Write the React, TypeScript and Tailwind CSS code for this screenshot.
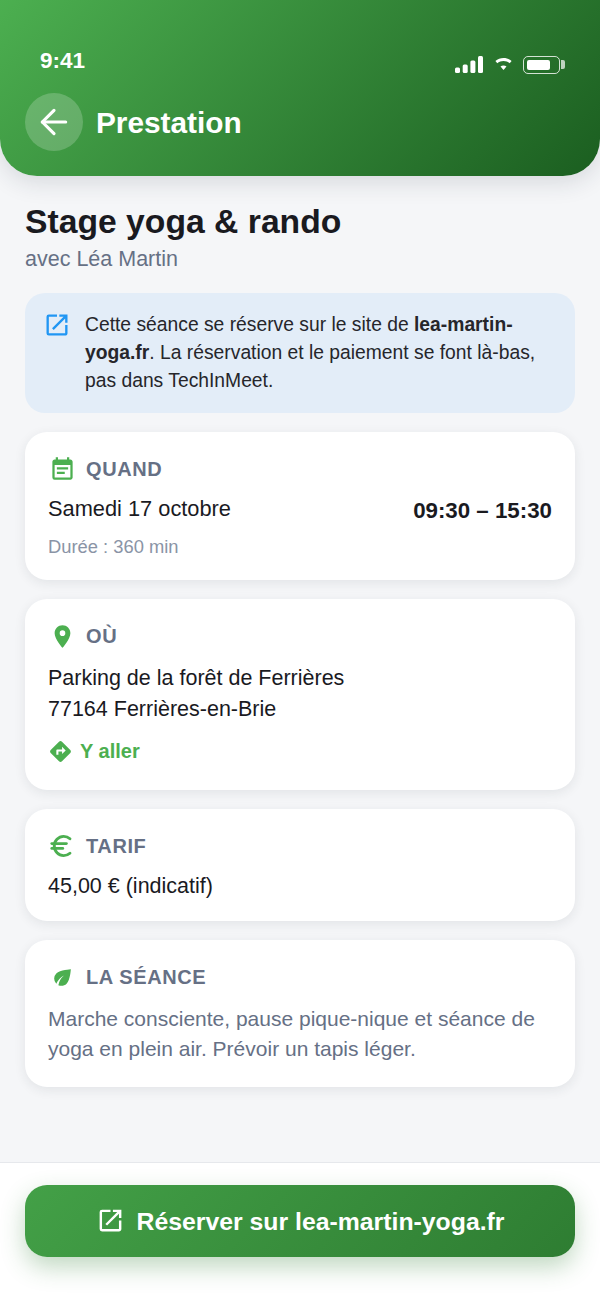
import React from 'react';
import { ArrowLeft, Euro } from 'lucide-react';
import { MdOpenInNew, MdEventNote, MdPlace, MdDirections, MdEco } from 'react-icons/md';

function StatusIcons() {
    return (
        <div className="flex items-center gap-[11px]">
            {/* signal */}
            <svg width="28" height="17" viewBox="0 0 28 17" fill="white">
                <rect x="0" y="11.5" width="5" height="5.5" rx="1.5" />
                <rect x="7.7" y="8.5" width="5" height="8.5" rx="1.5" />
                <rect x="15.4" y="4.5" width="5" height="12.5" rx="1.5" />
                <rect x="23" y="0" width="5" height="17" rx="1.5" />
            </svg>
            {/* wifi */}
            <svg width="17" height="13" viewBox="0 0 17 13" fill="white" className="ml-[1px]">
                <path d="M8.5 0c3 0 5.9 1.1 8.1 3.1l-1.9 2.1c-1.7-1.5-3.9-2.3-6.2-2.3s-4.5.8-6.2 2.3L.4 3.1C2.6 1.1 5.5 0 8.5 0z" />
                <path d="M5.5 8.5l3 3.5 3-3.5c-1.7-1.3-4.3-1.3-6 0z" />
            </svg>
            {/* battery */}
            <div className="flex items-center gap-[1px]">
                <div className="w-[37px] h-[18px] rounded-[5px] border-[1.5px] border-white/80 p-[3px]">
                    <div className="w-[23px] h-full rounded-[2px] bg-white" />
                </div>
                <div className="w-[4px] h-[9px] rounded-r-[2px] bg-white/70" />
            </div>
        </div>
    );
}

function Card({ icon, label, children }: { icon: React.ReactNode; label: string; children: React.ReactNode }) {
    return (
        <div className="bg-white rounded-[22px] shadow-[0_3px_12px_rgba(30,41,59,0.09)] px-[23px] pt-[23px] pb-[18px]">
            <div className="flex items-center h-[28px] mb-[10px]">
                <div className="w-[28px] flex justify-center text-[#4caf50] mr-[10px]">{icon}</div>
                <span className="text-[20px] leading-[28px] font-bold tracking-[0.6px] text-[#667085]">{label}</span>
            </div>
            {children}
        </div>
    );
}

export default function App() {
    return (
        <div className="w-[600px] h-[1300px] bg-[#f5f6f8] flex flex-col overflow-hidden font-['Liberation_Sans',sans-serif]">
            {/* Header */}
            <header className="h-[176px] shrink-0 rounded-b-[37px] bg-[linear-gradient(135deg,#4caf50,#1b5e20)] shadow-[0_6px_24px_rgba(30,41,59,0.14)] px-[25px] relative z-10">
                <div className="flex items-center justify-between pt-[47px] pl-[15px] pr-[10px] h-[74px]">
                    <span className="text-[22.5px] leading-[28px] font-bold text-white">9:41</span>
                    <div className="mt-[8px]">
                        <StatusIcons />
                    </div>
                </div>
                <div className="flex items-center gap-[13px] mt-[19px]">
                    <div className="w-[58px] h-[58px] rounded-full bg-white/20 flex items-center justify-center">
                        <ArrowLeft size={40} color="white" strokeWidth={1.9} />
                    </div>
                    <h1 className="mt-[2px] text-[29.8px] leading-[40px] font-bold text-white">Prestation</h1>
                </div>
            </header>

            {/* Content */}
            <main className="flex-1 px-[25px]">
                <h2 className="mt-[25px] text-[33.7px] leading-[40px] font-bold text-[#1a1a1f]">Stage yoga &amp; rando</h2>
                <p className="mt-[4px] text-[21.5px] leading-[28px] text-[#667085]">avec Léa Martin</p>

                <div className="mt-[20px] flex gap-[14px] rounded-[20px] bg-[#e3edf8] pl-[18px] pr-[30px] pt-[18px] pb-[10px] h-[120px]">
                    <MdOpenInNew size={28} color="#2196f3" className="shrink-0" />
                    <p className="text-[19.3px] leading-[28px] text-[#26262b]">
                        Cette séance se réserve sur le site de <strong className="font-bold">lea-martin-yoga.fr</strong>. La réservation et le paiement se font là-bas, pas dans TechInMeet.
                    </p>
                </div>

                <div className="mt-[19px] flex flex-col gap-[19px]">
                    <Card icon={<MdEventNote size={27} />} label="QUAND">
                        <div className="flex justify-between items-start">
                            <span className="text-[21.8px] leading-[32px] text-[#1a1a1f]">Samedi 17 octobre</span>
                            <span className="text-[22.3px] leading-[36px] font-bold text-[#1a1a1f]">09:30 – 15:30</span>
                        </div>
                        <p className="mt-[6px] mb-[3px] text-[18.35px] leading-[24px] text-[#8a94a6]">Durée : 360 min</p>
                    </Card>

                    <Card icon={<MdPlace size={27} />} label="OÙ">
                        <p className="mt-[13px] text-[21.5px] leading-[31px] text-[#1a1a1f]">
                            Parking de la forêt de Ferrières
                            <br />
                            77164 Ferrières-en-Brie
                        </p>
                        <div className="mt-[12px] mb-[7px] flex items-center gap-[7px] text-[#4caf50]">
                            <MdDirections size={25} />
                            <span className="text-[20px] leading-[28px] font-bold">Y aller</span>
                        </div>
                    </Card>

                    <Card icon={<Euro size={30} strokeWidth={2.4} className="-ml-[1px]" />} label="TARIF">
                        <p className="mt-[11px] mb-[1px] text-[21.5px] leading-[31px] text-[#1a1a1f]">45,00 € (indicatif)</p>
                    </Card>

                    <Card icon={<MdEco size={25} />} label="LA SÉANCE">
                        <p className="mt-[13px] mb-[5px] text-[21px] leading-[30px] text-[#667085]">
                            Marche consciente, pause pique-nique et séance de yoga en plein air. Prévoir un tapis léger.
                        </p>
                    </Card>
                </div>
            </main>

            {/* Footer */}
            <footer className="h-[138px] shrink-0 bg-white border-t border-[#e6e8ec] px-[25px] pt-[22px]">
                <button className="w-full h-[72px] rounded-[22px] bg-[linear-gradient(135deg,#43a047,#2e7d32)] shadow-[0_10px_24px_rgba(46,125,50,0.3)] flex items-center justify-center gap-[12px] text-white">
                    <MdOpenInNew size={29} className="-mt-[2px]" />
                    <span className="mt-[2px] text-[24.8px] leading-[32px] font-bold">Réserver sur lea-martin-yoga.fr</span>
                </button>
            </footer>
        </div>
    );
}
